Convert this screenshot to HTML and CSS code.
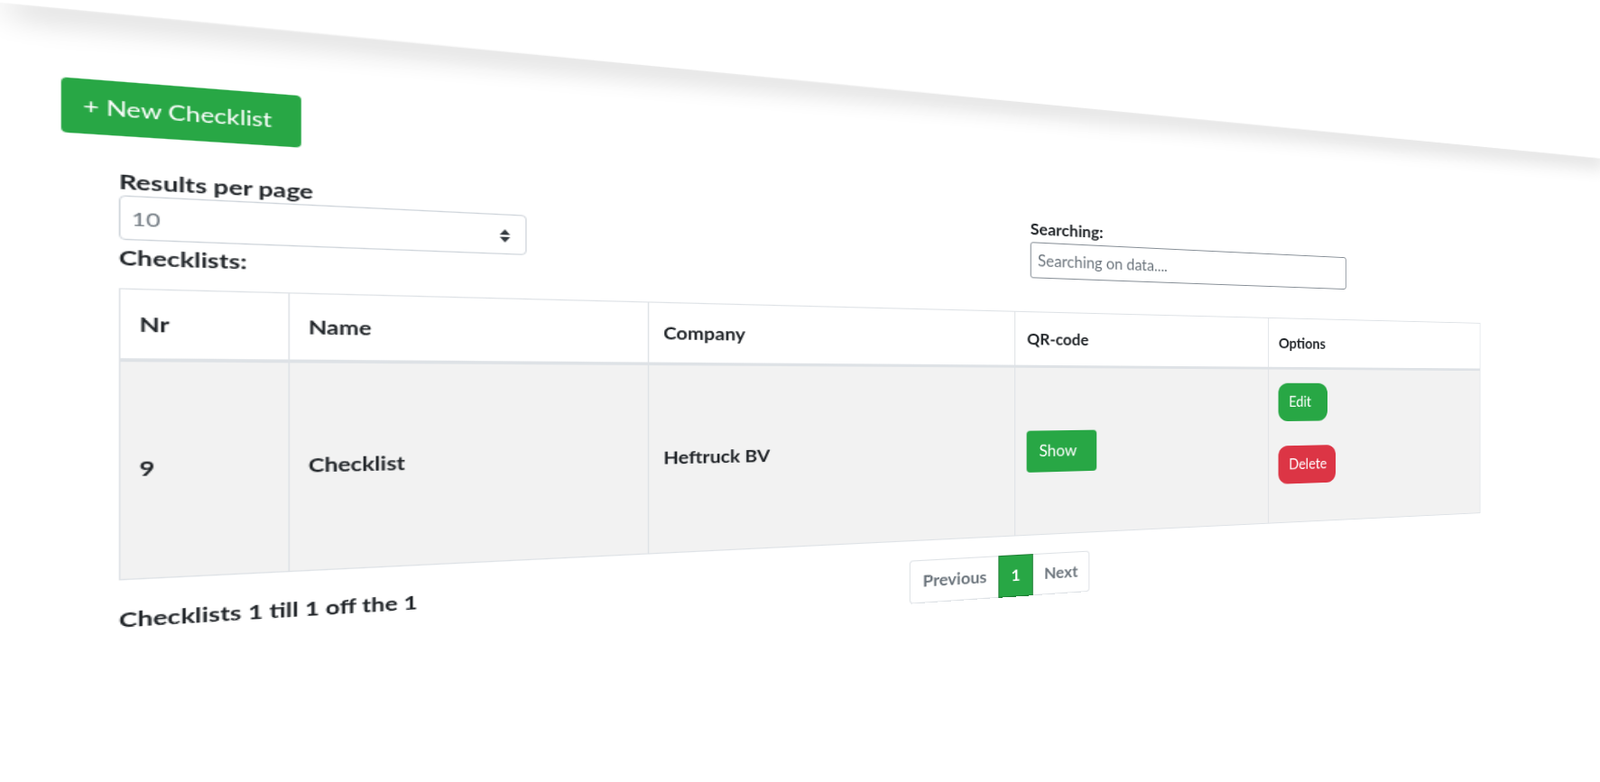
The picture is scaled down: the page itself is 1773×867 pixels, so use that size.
FILE: index.html
```html
<!DOCTYPE html>
<html>
  <head>
    <link rel="stylesheet" href="styles.css">
  </head>
  <body>
    <div class="page">
      <div class="navbar"></div>
      <a class="btn-new">+ New Checklist</a>
      <div class="content">
        <div class="controls">
          <div class="per-page">
            <div class="label per-page-label">Results per page</div>
            <div class="select-wrap">
              <select class="select-field">
                <option>10</option>
              </select>
              <svg class="select-arrows" viewBox="0 0 8 12">
                <path d="M4 0 L8 5 L0 5 Z M0 7 L8 7 L4 12 Z" fill="#343a40"/>
              </svg>
            </div>
            <div class="label list-title">Checklists:</div>
          </div>
          <div class="search">
            <div class="label">Searching:</div>
            <input class="search-field" type="text" placeholder="Searching on data....">
          </div>
        </div>
        <table class="list">
          <colgroup>
            <col class="col-nr">
            <col class="col-name">
            <col class="col-company">
            <col class="col-qr">
            <col class="col-options">
          </colgroup>
          <thead>
            <tr>
              <th>Nr</th>
              <th class="cell-name">Name</th>
              <th>Company</th>
              <th>QR-code</th>
              <th>Options</th>
            </tr>
          </thead>
          <tbody>
            <tr>
              <td class="cell-bold">9</td>
              <td class="cell-bold cell-name">Checklist</td>
              <td class="cell-bold">Heftruck BV</td>
              <td><a class="btn btn-show">Show</a></td>
              <td class="cell-options">
                <a class="btn btn-edit">Edit</a>
                <a class="btn btn-delete">Delete</a>
              </td>
            </tr>
          </tbody>
        </table>
        <div class="footer">
          <div class="label summary">Checklists 1 till 1 off the 1</div>
          <div class="pagination">
            <a class="page-link page-prev">Previous</a>
            <a class="page-link page-active">1</a>
            <a class="page-link page-next">Next</a>
          </div>
        </div>
      </div>
    </div>
  </body>
</html>
```

FILE: styles.css
```css
html,
body {
  margin: 0;
  height: 100%;
  overflow: hidden;
  background: #fff;
}
.page {
  width: 1582px;
  padding-top: 2px;
  font-family: "Lato", "Noto Sans", sans-serif;
  font-size: 16px;
  line-height: 24px;
  color: #212529;
  transform-origin: 0 0;
  transform: matrix3d(1.86, 0.1793, 0, 0.000417, 0, 1.38, 0, 0, 0, 0, 1, 0, 0, 0, 0, 1);
}
.navbar {
  height: 0;
  margin-left: 12px;
  box-shadow: 0 2px 24px 7px rgba(0, 0, 0, 0.2);
  clip-path: inset(0 -40px -60px -40px);
  transform-origin: 0 0;
  transform: skewY(0.13deg);
}
.btn-new {
  display: block;
  box-sizing: border-box;
  width: 157.5px;
  height: 45px;
  margin: 56px 0 0 36.5px;
  padding: 0 14px;
  background: #28a745;
  border-radius: 4px;
  color: #fff;
  font-size: 17.3px;
  line-height: 46px;
}
.content {
  width: 1321.5px;
  margin-left: 73px;
}
.controls {
  display: flex;
  gap: 464px;
  margin-top: 25px;
}
.per-page {
  width: 288px;
}
.label {
  font-size: 17.5px;
  font-weight: 700;
}
.per-page-label {
  padding-top: 1px;
  font-size: 17.8px;
  line-height: 23px;
}
.select-wrap {
  position: relative;
}
.select-field {
  display: block;
  box-sizing: border-box;
  width: 100%;
  height: 37px;
  padding: 0 7px;
  appearance: none;
  background: #fff;
  border: 1px solid #ced4da;
  border-radius: 4px;
  color: #6c757d;
  font-family: inherit;
  font-size: 16px;
}
.select-arrows {
  position: absolute;
  top: 14px;
  right: 13px;
  width: 8px;
  height: 12px;
}
.list-title {
  margin-top: 3px;
}
.search {
  width: 380px;
}
.search-field {
  display: block;
  box-sizing: border-box;
  width: 100%;
  height: 39px;
  margin-top: 2px;
  padding: 0 7px;
  border: 1px solid #868e96;
  border-radius: 3px;
  font-family: inherit;
  font-size: 16.8px;
}
.search-field::placeholder {
  color: #6c757d;
}
.list {
  width: 1321.5px;
  margin-top: 13px;
  table-layout: fixed;
  border-collapse: collapse;
  border: 1px solid #dee2e6;
}
.col-nr {
  width: 111.6px;
}
.col-name {
  width: 275.7px;
}
.col-company {
  width: 348.2px;
}
.col-qr {
  width: 295px;
}
.col-options {
  width: 291px;
}
th,
td {
  padding: 12px;
  border: 1px solid #dee2e6;
  font-size: 17px;
  text-align: left;
}
th {
  height: 33px;
  font-weight: 700;
  vertical-align: middle;
  border-bottom: 3px solid #dee2e6;
}
td {
  box-sizing: border-box;
  height: 182px;
  background: #f2f2f2;
  vertical-align: middle;
}
th.cell-name,
td.cell-name {
  padding-left: 13.3px;
}
.cell-bold {
  padding-bottom: 14px;
  font-weight: 700;
}
.btn {
  display: block;
  box-sizing: border-box;
  height: 45px;
  padding: 0 13px;
  color: #fff;
  line-height: 44px;
}
.btn-show {
  width: 77px;
  background: #28a745;
  border-radius: 4px;
}
.cell-options {
  vertical-align: top;
  padding-top: 16px;
}
.btn-edit {
  width: 64px;
  background: #28a745;
  border-radius: 12px;
}
.btn-delete {
  width: 75px;
  margin-top: 29px;
  background: #dc3545;
  border-radius: 12px;
}
.footer {
  display: grid;
  grid-template-columns: 627px auto;
  margin-top: 20px;
}
.summary {
  margin-top: 1px;
  font-size: 17.7px;
}
.pagination {
  display: flex;
  width: 190px;
  color: #6c757d;
  font-size: 17px;
  font-weight: 700;
}
.page-link {
  display: block;
  box-sizing: border-box;
  height: 45px;
  border: 1px solid #dee2e6;
  line-height: 42px;
  text-align: center;
}
.page-prev {
  width: 91px;
  border-right: 0;
  border-radius: 4px 0 0 4px;
}
.page-active {
  width: 37px;
  background: #28a745;
  border-color: #1e7e34;
  color: #fff;
}
.page-next {
  flex: 1;
  border-left: 0;
  border-radius: 0 4px 4px 0;
}
```
